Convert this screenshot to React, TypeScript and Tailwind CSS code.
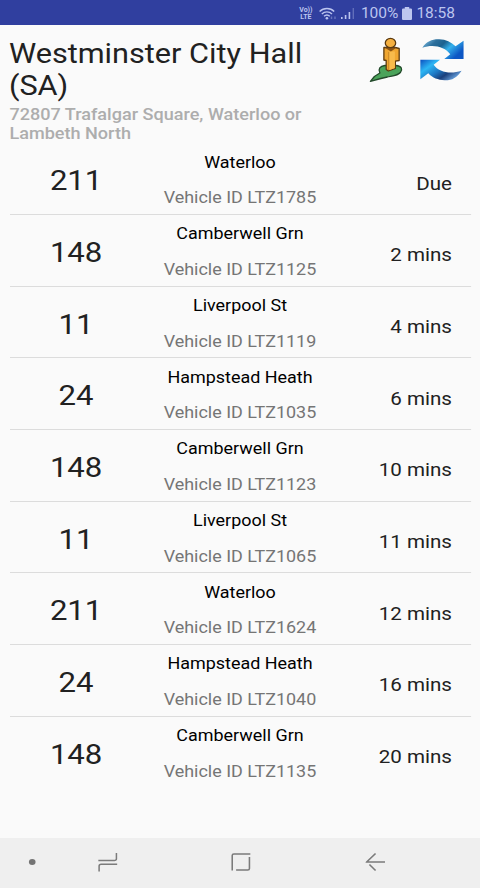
import { useState } from 'react'

type Arrival = {
  route: string
  destination: string
  vehicle: string
  due: string
}

const initialArrivals: Arrival[] = [
  { route: '211', destination: 'Waterloo', vehicle: 'LTZ1785', due: 'Due' },
  { route: '148', destination: 'Camberwell Grn', vehicle: 'LTZ1125', due: '2 mins' },
  { route: '11', destination: 'Liverpool St', vehicle: 'LTZ1119', due: '4 mins' },
  { route: '24', destination: 'Hampstead Heath', vehicle: 'LTZ1035', due: '6 mins' },
  { route: '148', destination: 'Camberwell Grn', vehicle: 'LTZ1123', due: '10 mins' },
  { route: '11', destination: 'Liverpool St', vehicle: 'LTZ1065', due: '11 mins' },
  { route: '211', destination: 'Waterloo', vehicle: 'LTZ1624', due: '12 mins' },
  { route: '24', destination: 'Hampstead Heath', vehicle: 'LTZ1040', due: '16 mins' },
  { route: '148', destination: 'Camberwell Grn', vehicle: 'LTZ1135', due: '20 mins' },
]

const StatusBar = () => (
  <div className="flex h-[25px] items-center justify-end bg-[#303f9f] pr-[25px] pt-[2px] font-[Roboto,sans-serif] text-[15.500px] leading-none text-[#bcc5ef]">
    <div className="mr-[6px] flex w-[14px] flex-col items-center text-[7px] font-bold leading-[7px]">
      <span>Vo))</span>
      <span>LTE</span>
    </div>
    <svg className="mr-[3px] h-[14px] w-[19px]" viewBox="0 0 19 14" fill="none" stroke="currentColor" strokeWidth="1.4">
      <path d="M0.600 4.400C4.600 0.600 11.400 0.600 15.200 4.400" />
      <path d="M2.800 6.900C5.700 4.200 10.100 4.200 13 6.900" />
      <path d="M5 9.300C6.800 7.600 9 7.600 10.800 9.300" />
      <circle cx="7.900" cy="11.200" r="1.300" fill="currentColor" stroke="none" />
      <path d="M12.500 9.500v2.500M16 9.500v2.500" strokeOpacity="0.4" />
    </svg>
    <svg className="mr-[6px] h-[13px] w-[14px]" viewBox="0 0 14 13" fill="currentColor">
      <rect x="0" y="10" width="1.600" height="2" />
      <rect x="3.800" y="8" width="1.600" height="4" />
      <rect x="7.600" y="5" width="1.600" height="7" />
      <rect x="11.600" y="1" width="1.400" height="11" opacity="0.35" />
    </svg>
    <span>100%</span>
    <svg className="mx-[4px] h-[13px] w-[10px]" viewBox="0 0 9 13" preserveAspectRatio="none" fill="currentColor">
      <path d="M2.500 0h4v1.500H8a1 1 0 0 1 1 1V12a1 1 0 0 1-1 1H1a1 1 0 0 1-1-1V2.500a1 1 0 0 1 1-1h1.500z" />
    </svg>
    <span>18:58</span>
  </div>
)

const StreetViewIcon = () => (
  <svg className="h-[46px] w-[30.600px]" viewBox="0 0 34 46" preserveAspectRatio="none" strokeLinejoin="round">
    <path d="M1.500 44.300L5.500 39.500L11 36C9 32 11 29 16 28.500L27 28.500C33 29 34 32.500 31.500 35.500C28.500 39 22 39 18.500 40L12 41.500Z" fill="#4aa35a" stroke="#234a2b" strokeWidth="1.3" />
    <path d="M15 10.500H26.500L30.300 11.500V23.500L26.500 24.200V31.500L19.500 34L17.300 32.500V23.500L15 23Z" fill="#f0a630" stroke="#5b3a10" strokeWidth="1.300" />
    <path d="M20 15V33" stroke="#b87820" strokeWidth="0.9" />
    <path d="M20.500 14.500H26V31L20.500 33Z" fill="#f8bb4c" />
    <path d="M16 10.800H27.500L22 14.500Z" fill="#8a5212" />
    <ellipse cx="21.600" cy="6" rx="5.200" ry="4.700" fill="#f5b040" stroke="#5b3a10" strokeWidth="1.300" />
  </svg>
)

const RefreshIcon = () => (
  <svg className="h-[42px] w-[39.500px]" viewBox="26 27 132 126" preserveAspectRatio="none">
    <defs>
      <linearGradient id="arrowTop" x1="0" y1="0" x2="1" y2="0.5">
        <stop offset="0" stopColor="#8ccdf0" />
        <stop offset="0.3" stopColor="#2d6f9c" />
        <stop offset="0.5" stopColor="#1c628f" />
        <stop offset="0.7" stopColor="#35b2ec" />
        <stop offset="1" stopColor="#0d56c4" />
      </linearGradient>
      <linearGradient id="arrowBottom" x1="0" y1="0" x2="1" y2="0.7">
        <stop offset="0" stopColor="#0b4fc0" />
        <stop offset="0.3" stopColor="#2cb6f4" />
        <stop offset="0.550" stopColor="#1f78c4" />
        <stop offset="0.750" stopColor="#1a3f7c" />
        <stop offset="1" stopColor="#6aa4e0" />
      </linearGradient>
    </defs>
    <path d="M33 53C46 34 64 27 84 28C104 29 120 36 133 49L157 32V87H99L117 73C101 50 66 42 33 53Z" fill="url(#arrowTop)" />
    <path d="M151 122C138 143 120 152 100 151C80 150 64 144 51 130L27 148V89H86L67 104C83 127 118 133 151 122Z" fill="url(#arrowBottom)" />
  </svg>
)

const ArrivalRow = ({ arrival }: { arrival: Arrival }) => (
  <li className="grid h-[71.700px] grid-cols-[119px_1fr_119px] items-center border-b border-[#dcdcdc] last:border-transparent">
    <span className="pl-[1px] pt-[5px] text-center text-[28px] leading-none text-[#212121]">{arrival.route}</span>
    <div className="flex flex-col items-center gap-[15.500px] pt-[3.500px] text-[16.150px] leading-[20px]">
      <span className="text-black">{arrival.destination}</span>
      <span className="text-[#757575]">Vehicle ID {arrival.vehicle}</span>
    </div>
    <span className="pr-[16.800px] pt-[10.500px] text-right text-[18.500px] leading-none text-[#212121]">{arrival.due}</span>
  </li>
)

const NavBar = () => (
  <div className="flex h-[50px] items-center bg-[#efefef] pb-[2px] text-[#7b7b7b]">
    <div className="ml-[26px] h-[6px] w-[6px] rounded-full bg-[#747474]" />
    <svg className="ml-[56px] h-[20px] w-[18px]" viewBox="0 0 18 20" fill="none" stroke="currentColor" strokeWidth="1.4">
      <path d="M0.500 8.500H15a1.800 1.800 0 0 0 1.800-1.800V1" />
      <path d="M17.500 12.200H3a1.800 1.800 0 0 0-1.800 1.800V19.500" />
    </svg>
    <svg className="ml-[102px] h-[20px] w-[18px]" viewBox="0 0 18 20" fill="none" stroke="currentColor" strokeWidth="1.4">
      <path d="M17.300 2H2.500a1.500 1.500 0 0 0-1.500 1.500V18.500" />
      <path d="M16.500 5V16.500a1.500 1.500 0 0 1-1.500 1.500H4.500" />
    </svg>
    <svg className="ml-[103px] h-[20px] w-[18px]" viewBox="0 0 18 20" fill="none" stroke="currentColor" strokeWidth="1.4">
      <path d="M9 1.500L1 10H17.500" />
      <path d="M3.500 12.500L9 18.500" />
    </svg>
  </div>
)

export default function App() {
  const [arrivals, setArrivals] = useState(initialArrivals)

  const handleRefresh = () => {
    setArrivals([...initialArrivals])
  }

  return (
    <div className="h-[888px] w-[480px] overflow-hidden bg-[#fafafa]">
      <StatusBar />
      {/* everything below the status bar is laid out 432 wide and stretched over the full screen */}
      <div className="flex h-[863px] w-[432px] origin-top-left scale-x-[1.1111] flex-col font-[Roboto,sans-serif]">
        <header className="flex h-[118.300px] justify-between px-[8.500px] pt-[12px]">
          <div className="w-[280px]">
            <h1 className="-ml-[0.500px] pt-[1px] text-[27.600px] leading-[32px] text-[#212121]">Westminster City Hall (SA)</h1>
            <p className="mt-[3px] text-[16.250px] font-medium leading-[19px] text-[#adadad]">72807 Trafalgar Square, Waterloo or Lambeth North</p>
          </div>
          <div className="flex gap-[15px] pr-[6px]">
            <StreetViewIcon />
            <button onClick={handleRefresh} className="flex h-[46px] items-center">
              <RefreshIcon />
            </button>
          </div>
        </header>
        <ul className="flex-1 px-[8.500px]">
          {arrivals.map((arrival) => (
            <ArrivalRow key={arrival.vehicle} arrival={arrival} />
          ))}
        </ul>
        <NavBar />
      </div>
    </div>
  )
}
